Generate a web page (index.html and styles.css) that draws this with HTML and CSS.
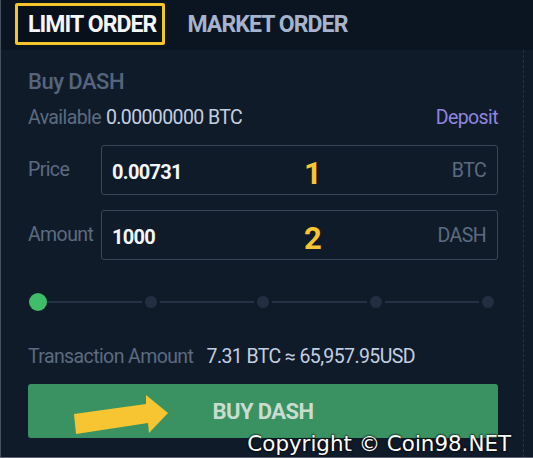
FILE: index.html
```html
<!DOCTYPE html>
<html lang="en">
<head>
  <meta charset="UTF-8">
  <meta name="viewport" content="width=device-width, initial-scale=1.0">
  <title>Buy DASH</title>
  <link rel="stylesheet" href="styles.css">
</head>
<body>
  <div class="frame">
    <!-- Tabs -->
    <nav class="tabs">
      <span class="tab active">LIMIT ORDER</span>
      <span class="tab">MARKET ORDER</span>
    </nav>

    <div class="panel">
      <h2 class="title">Buy DASH</h2>
      <div class="available">
        <span class="muted">Available</span>
        <span class="value">0.00000000 BTC</span>
        <span class="deposit">Deposit</span>
      </div>

      <div class="field">
        <label>Price</label>
        <div class="input">
          <span class="input-value">0.00731</span>
          <span class="step">1</span>
          <span class="unit">BTC</span>
        </div>
      </div>

      <div class="field">
        <label>Amount</label>
        <div class="input">
          <span class="input-value">1000</span>
          <span class="step">2</span>
          <span class="unit">DASH</span>
        </div>
      </div>

      <div class="slider">
        <span class="stop"><span class="dot on"></span></span>
        <span class="stop"><span class="dot"></span></span>
        <span class="stop"><span class="dot"></span></span>
        <span class="stop"><span class="dot"></span></span>
        <span class="stop"><span class="dot"></span></span>
      </div>

      <div class="total">
        <span class="muted">Transaction Amount</span>
        <span class="value">7.31 BTC &asymp; 65,957.95USD</span>
      </div>

      <button class="buy">
        <svg class="arrow" width="150" height="54" viewBox="0 0 150 54">
          <polygon points="46,30 118,20 118,11 140,29 121,49 120,39 48,50" fill="#f6c531"/>
        </svg>
        BUY DASH
      </button>
    </div>

    <div class="copyright">Copyright &copy; Coin98.NET</div>
  </div>
</body>
</html>
```

FILE: styles.css
```css
/* General */
body {
  margin: 0;
  background: #0f1a28;
  font-family: Roboto, "Liberation Sans", sans-serif;
  color: #c9d4e4;
}

.frame {
  position: relative;
  width: 532px;
  height: 457px;
  border-left: 1px solid #465061;
  border-bottom: 1px solid #5a6272;
  background: #101b2a;
  overflow: hidden;
}

/* Tabs */
.tabs {
  height: 50px;
  display: flex;
  align-items: center;
  gap: 12px;
  padding-left: 14px;
  background: #0b1521;
}

.tab {
  font-size: 23px;
  font-weight: 700;
  letter-spacing: -0.9px;
  color: #a6b3cc;
  padding: 5px 6px 4px 10px;
  margin-top: -2px;
}

.tab.active {
  color: #f4f6fb;
  border: 3px solid #f3c52a;
  border-radius: 2px;
  background: #08111b;
}

/* Panel */
.panel {
  margin-right: 9px;
  padding: 18px 25px 0 27px;
  border-right: 1px dashed #25324a;
  height: 389px;
}

.title {
  margin: 0;
  font-size: 22px;
  font-weight: 500;
  letter-spacing: -0.5px;
  color: #56657b;
  line-height: 28px;
}

.available {
  display: flex;
  align-items: center;
  margin-top: 9px;
  font-size: 19.5px;
  letter-spacing: -0.6px;
  line-height: 26px;
}

.muted {
  color: #5c6b80;
}

.value {
  color: #c3cfe0;
  margin-left: 5px;
}

.deposit {
  margin-left: auto;
  color: #8e86de;
}

/* Inputs */
.field {
  display: flex;
  align-items: center;
  margin-top: 14px;
}

.field + .field {
  margin-top: 15px;
}

.field label {
  width: 73px;
  font-size: 19.5px;
  letter-spacing: -0.6px;
  color: #5c6b80;
  margin-top: -2px;
}

.input {
  position: relative;
  flex: 1;
  height: 48px;
  display: flex;
  align-items: center;
  padding: 0 11px 0 10px;
  border: 1px solid #3a4557;
  border-radius: 3px;
}

.input-value {
  font-size: 20px;
  font-weight: 700;
  letter-spacing: -0.7px;
  color: #f2f5fa;
  margin-top: 4px;
}

.step {
  position: absolute;
  left: 202px;
  top: 10px;
  font-size: 31px;
  line-height: 36px;
  font-weight: 700;
  color: #f6c531;
}

.unit {
  margin-left: auto;
  font-size: 19.5px;
  letter-spacing: -0.6px;
  color: #5c6b80;
}

/* Slider */
.slider {
  position: relative;
  display: flex;
  justify-content: space-between;
  align-items: center;
  margin: 32px 1px 0 1px;
  height: 20px;
}

.slider::before {
  content: "";
  position: absolute;
  left: 10px;
  right: 8px;
  top: 9px;
  height: 2px;
  background: #243044;
}

.stop {
  position: relative;
  width: 18px;
  height: 18px;
  display: flex;
  align-items: center;
  justify-content: center;
}

.dot {
  width: 12px;
  height: 12px;
  border-radius: 50%;
  background: #232f41;
  box-shadow: 0 0 0 3px #101b2a;
}

.dot.on {
  width: 18px;
  height: 18px;
  background: #3fbd68;
  box-shadow: none;
}

/* Total */
.total {
  margin-top: 32px;
  font-size: 19.5px;
  letter-spacing: -0.6px;
  line-height: 26px;
}

.total .value {
  margin-left: 9px;
}

/* Button */
.buy {
  position: relative;
  display: block;
  width: 100%;
  height: 54px;
  margin-top: 14px;
  border: none;
  border-radius: 3px;
  background: #3a9162;
  color: #c8dccf;
  font-family: Roboto, "Liberation Sans", sans-serif;
  font-size: 22px;
  font-weight: 700;
  letter-spacing: -0.6px;
  padding: 0;
}

.arrow {
  position: absolute;
  left: 0;
  top: 0;
}

/* Watermark */
.copyright {
  position: absolute;
  right: 22px;
  bottom: 1px;
  font-family: "DejaVu Sans", sans-serif;
  font-size: 21.4px;
  color: #ffffff;
  text-shadow: 0 0 2px #000000, 0 0 2px #000000;
}
```
